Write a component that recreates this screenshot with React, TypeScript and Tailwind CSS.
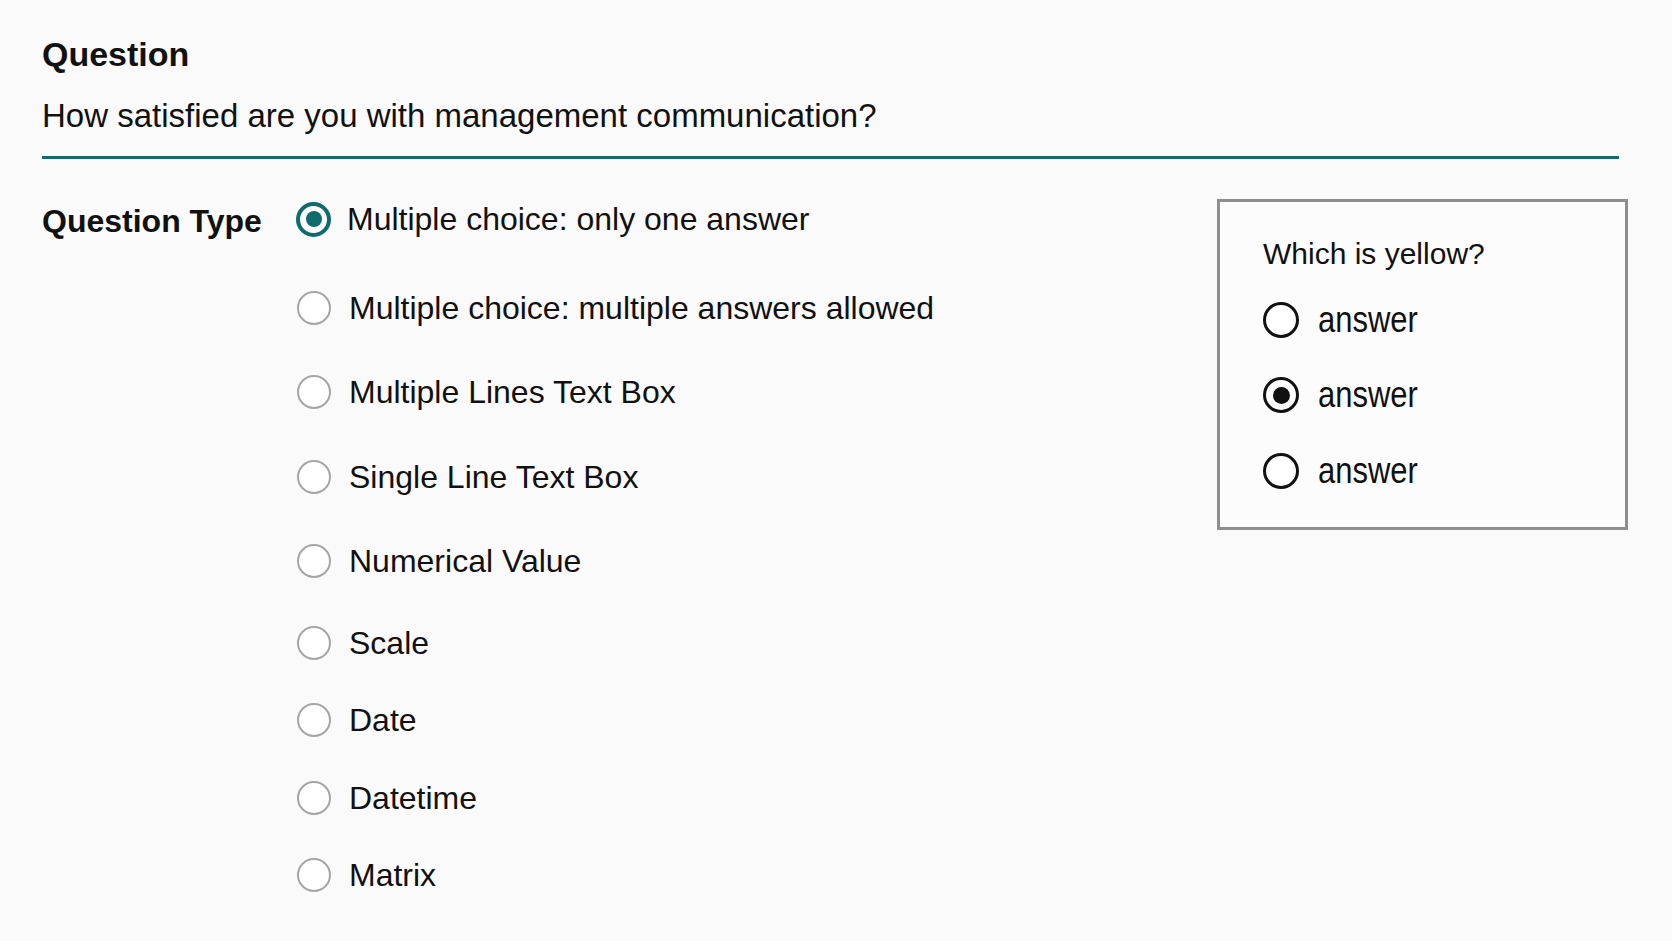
import React from "react";

type Option = { label: string; gap: string; selected?: boolean };

const options: Option[] = [
  { label: "Multiple choice: only one answer", gap: "mt-0", selected: true },
  { label: "Multiple choice: multiple answers allowed", gap: "mt-[53px]" },
  { label: "Multiple Lines Text Box", gap: "mt-[48px]" },
  { label: "Single Line Text Box", gap: "mt-[49px]" },
  { label: "Numerical Value", gap: "mt-[48px]" },
  { label: "Scale", gap: "mt-[46px]" },
  { label: "Date", gap: "mt-[41px]" },
  { label: "Datetime", gap: "mt-[42px]" },
  { label: "Matrix", gap: "mt-[41px]" },
];

function TypeRadio({ selected }: { selected?: boolean }) {
  if (selected) {
    return (
      <span className="flex h-[35px] w-[35px] shrink-0 items-center justify-center rounded-full border-[4px] border-[#0f6b6c] bg-white">
        <span className="h-[16px] w-[16px] rounded-full bg-[#0f6b6c]" />
      </span>
    );
  }
  return (
    <span className="ml-[1px] h-[34px] w-[34px] shrink-0 rounded-full border-[2px] border-[#a5a5a5] bg-white" />
  );
}

function PreviewRadio({ checked }: { checked?: boolean }) {
  return (
    <span className="flex h-[36px] w-[36px] shrink-0 items-center justify-center rounded-full border-[3px] border-[#111111] bg-white">
      {checked && <span className="h-[17px] w-[17px] rounded-full bg-[#111111]" />}
    </span>
  );
}

const answers = [
  { checked: false, gap: "mt-[33px]" },
  { checked: true, gap: "mt-[39px]" },
  { checked: false, gap: "mt-[40px]" },
];

export default function App() {
  return (
    <div
      className="min-h-screen w-full bg-[#fafafa] pt-[37px] text-[#111111]"
      style={{ fontFamily: '"Liberation Sans", Arial, sans-serif' }}
    >
      <div className="pl-[42px] pr-[53px]">
        <h2 className="text-[34px] font-bold leading-[34px]">Question</h2>
        <p className="mt-[28px] border-b-[3px] border-[#17696a] pb-[24px] text-[33px] leading-[33px]">
          How satisfied are you with management communication?
        </p>
      </div>

      <div className="mt-[40px] flex items-start pl-[42px] pr-[44px]">
        <div className="mt-[4px] flex h-[36px] w-[254px] shrink-0 items-center">
          <span className="text-[32px] font-bold leading-[36px]">Question Type</span>
        </div>

        <div className="flex flex-1 flex-col pt-[2px]">
          {options.map((o) => (
            <label key={o.label} className={`flex h-[36px] items-center ${o.gap}`}>
              <TypeRadio selected={o.selected} />
              <span
                className={`text-[32px] leading-[36px] whitespace-nowrap ${
                  o.selected ? "ml-[16px]" : "ml-[18px]"
                }`}
              >
                {o.label}
              </span>
            </label>
          ))}
        </div>

        <div className="h-[331px] w-[411px] shrink-0 border-[3px] border-[#8e8e8e] bg-[#fcfcfc] pl-[43px] pt-[37px]">
          <div className="text-[30px] leading-[30px]">Which is yellow?</div>
          {answers.map((a, i) => (
            <div key={i} className={`flex h-[36px] items-center ${a.gap}`}>
              <PreviewRadio checked={a.checked} />
              <span className="ml-[19px] inline-block origin-center scale-y-[1.22] text-[31px] leading-[36px]">
                answer
              </span>
            </div>
          ))}
        </div>
      </div>
    </div>
  );
}
